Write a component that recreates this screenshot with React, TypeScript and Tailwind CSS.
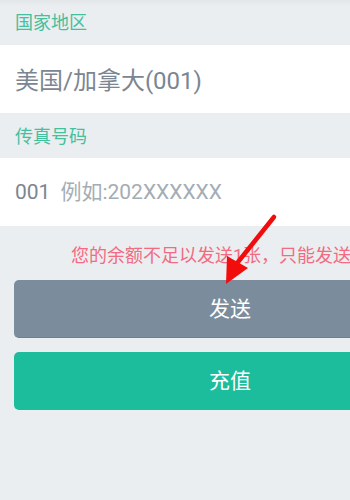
export default function App() {
  return (
    <div className="w-[350px] h-[500px] overflow-hidden bg-[#ebeef0]" style={{ fontFamily: 'Roboto, "Noto Sans CJK SC", sans-serif' }}>
      <div className="relative w-[460px]">
        {/* 国家地区 */}
        <div className="h-[45px] px-[15px] flex items-center bg-gradient-to-b from-[#e2e6e8] to-[#ebeef0] to-[6px]">
          <span className="text-[18px] leading-none text-[#45c09e]">国家地区</span>
        </div>
        <div className="h-[68px] px-[15px] pt-[3px] flex items-center bg-white">
          <span className="text-[24px] leading-none text-[#7b8692]">美国/加拿大(001)</span>
        </div>

        {/* 传真号码 */}
        <div className="h-[45px] px-[15px] pt-[2px] flex items-center">
          <span className="text-[18px] leading-none text-[#45c09e]">传真号码</span>
        </div>
        <div className="h-[68px] px-[15px] flex items-center gap-[10px] bg-white">
          <span className="text-[21px] leading-none text-[#7b8692]">001</span>
          <span className="text-[21px] leading-none text-[#a3adb5]">例如:202XXXXXX</span>
        </div>

        {/* notice + buttons */}
        <div className="px-[14px]">
          <p className="h-[54px] pt-[6px] pl-[57px] flex items-center text-[18px] leading-none text-[#f26b82] whitespace-nowrap">
            您的余额不足以发送1张，只能发送0张
          </p>
          <button className="w-full h-[58px] pt-[3px] rounded-[5px] bg-[#7b8d9c] border-b border-[#6f8190] text-white text-[21px]">
            发送
          </button>
          <button className="mt-[14px] w-full h-[58px] pt-[2px] rounded-[5px] bg-[#1bbd9c] text-white text-[21px]">
            充值
          </button>
        </div>

        {/* red annotation arrow */}
        <svg className="absolute left-0 top-0 pointer-events-none" width="350" height="300" viewBox="0 0 350 300">
          <line x1="274" y1="217" x2="238" y2="262" stroke="#f20d0d" strokeWidth="4.5" strokeLinecap="round" />
          <polygon points="226,284 227,256 248,268" fill="#f20d0d" />
        </svg>
      </div>
    </div>
  );
}
